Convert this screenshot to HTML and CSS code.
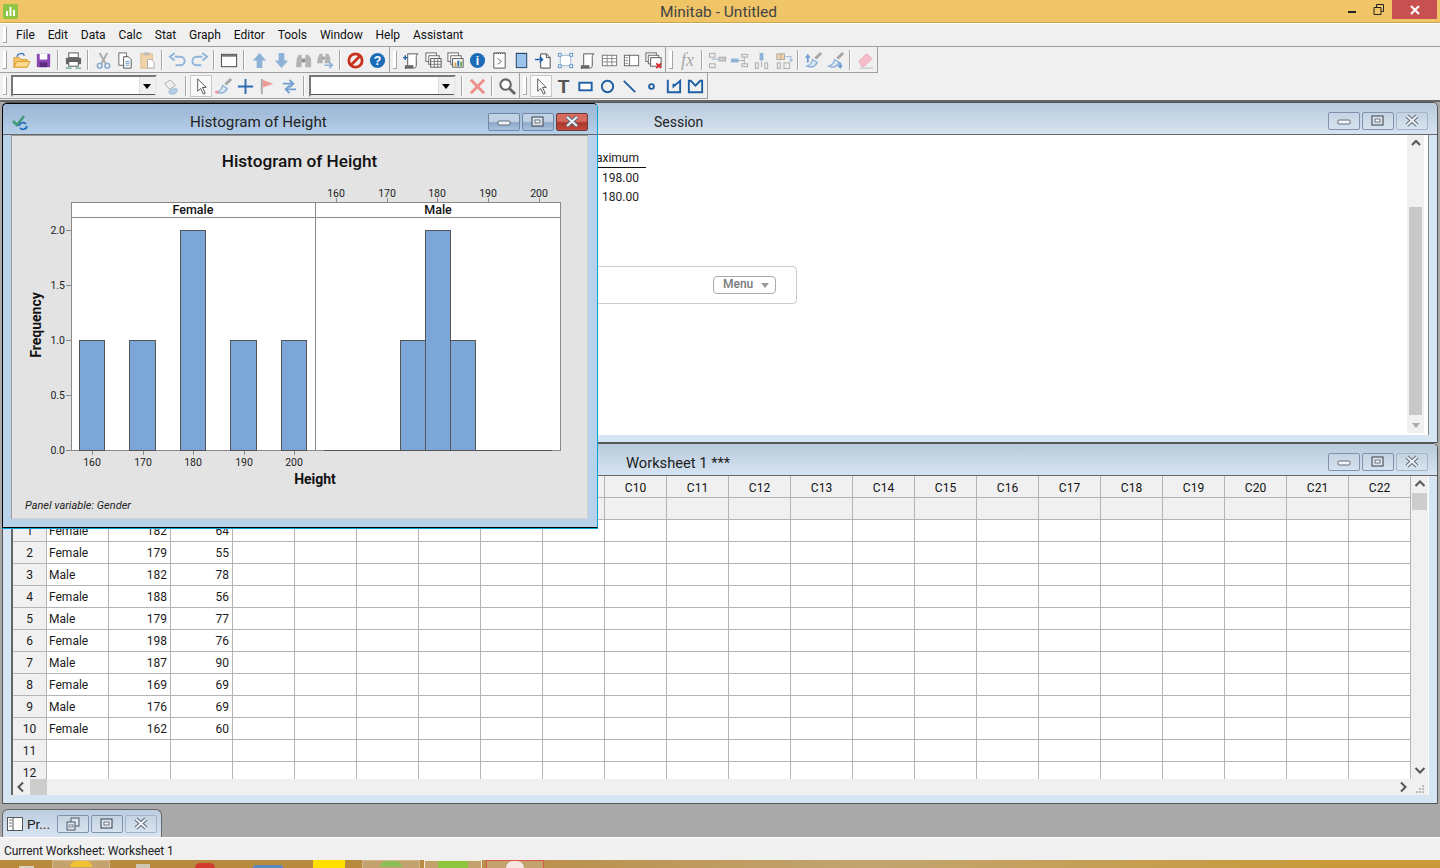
FILE: index.html
```html
<!DOCTYPE html>
<html lang="en">
<head>
<meta charset="utf-8">
<title>Minitab - Untitled</title>
<link rel="stylesheet" href="styles.css">
</head>
<body>
<svg class="defs" aria-hidden="true">
  <symbol id="w-min" viewBox="0 0 32 18"><rect x="10" y="8" width="12" height="4" rx="1" fill="#f4f6f9" stroke="#5f6b7a"/></symbol>
  <symbol id="w-max" viewBox="0 0 32 18"><rect x="10" y="4" width="11" height="9" fill="#dfe5ec" stroke="#4d5866" stroke-width="1.2"/><rect x="13" y="7" width="5" height="3" fill="#f8f9fb" stroke="#4d5866" stroke-width=".8"/></symbol>
  <symbol id="w-close" viewBox="0 0 32 18"><path d="M11 4l10 9M21 4l-10 9" stroke="#5f6b7a" stroke-width="4"/><path d="M11 4l10 9M21 4l-10 9" stroke="#eef1f5" stroke-width="2"/></symbol>
  <symbol id="w-restore" viewBox="0 0 32 18"><rect x="14" y="3" width="8" height="8" fill="#dfe5ec" stroke="#4d5866"/><rect x="10" y="7" width="8" height="8" fill="#dfe5ec" stroke="#4d5866"/><rect x="12" y="10" width="4" height="2" fill="#fff" stroke="#4d5866" stroke-width=".7"/></symbol>
  <symbol id="t-brush" viewBox="0 0 20 20"><path d="M12 8l6-6" stroke="#a5a5a5" stroke-width="3"/><path d="M3 16c3-1 5-3 6-7l5 3c-2 4-6 6-11 4z" fill="#dbe7f3" stroke="#8db1d7" stroke-width="1.400"/></symbol>
</svg>

<header class="titlebar">
  <svg class="appicon" viewBox="0 0 15 15"><rect width="15" height="15" rx="2" fill="#8ec641"/><path d="M3 12V7h2v5zM6.500 12V3h2v9zM10 12V6h2v6z" fill="#fff"/></svg>
  <span class="apptitle">Minitab - Untitled</span>
  <div class="appctl">
    <svg class="ctl" viewBox="0 0 26 19"><rect x="8" y="11" width="8" height="2" fill="#222"/></svg>
    <svg class="ctl" viewBox="0 0 26 19"><path d="M8 7.500h7v7h-7zM10.500 7V4.500h7v7H15.500" fill="none" stroke="#222" stroke-width="1"/></svg>
    <span class="ctl-close"><svg class="ctl-x" viewBox="0 0 10 10"><path d="M1 1l8 8M9 1l-8 8" stroke="#fff" stroke-width="2"/></svg></span>
  </div>
</header>

<nav class="menubar">
  <span class="grip"></span>
  <span class="mi">File</span><span class="mi">Edit</span><span class="mi">Data</span><span class="mi">Calc</span><span class="mi">Stat</span><span class="mi">Graph</span><span class="mi">Editor</span><span class="mi">Tools</span><span class="mi">Window</span><span class="mi">Help</span><span class="mi">Assistant</span>
</nav>

<div class="tbrow">
  <div class="toolbar">
    <span class="grip"></span>
    <span class="tb"><svg viewBox="0 0 20 20"><path d="M2 17V7h6l1 2h7v8z" fill="#f6c56a" stroke="#d99a2b"/><path d="M2 17l3-6h14l-3 6z" fill="#fbd98f" stroke="#d99a2b"/><path d="M5 6c1-3 4-4 7-3l1 2" fill="none" stroke="#3f7fbf" stroke-width="1.500"/></svg></span>
    <span class="tb"><svg viewBox="0 0 20 20"><path d="M3 3h14v14H3z" fill="#8a46b4"/><rect x="6" y="3" width="8" height="6" fill="#fff"/><rect x="6" y="12" width="8" height="5" fill="#5c2a80"/></svg></span>
    <span class="sep"></span>
    <span class="tb"><svg viewBox="0 0 20 20"><rect x="5" y="2" width="10" height="5" fill="#fff" stroke="#555"/><rect x="2" y="7" width="16" height="7" rx="1" fill="#666"/><rect x="5" y="11" width="10" height="5" fill="#fff" stroke="#555"/><path d="M2 18h6M12 18h6" stroke="#2f8f6f"/></svg></span>
    <span class="sep"></span>
    <span class="tb"><svg viewBox="0 0 20 20"><path d="M6 2l6 11M14 2L8 13" stroke="#a9a9a9" stroke-width="2"/><circle cx="6" cy="15.500" r="2.500" fill="none" stroke="#7ea6d2" stroke-width="1.500"/><circle cx="14" cy="15.500" r="2.500" fill="none" stroke="#7ea6d2" stroke-width="1.500"/></svg></span>
    <span class="tb"><svg viewBox="0 0 20 20"><path d="M3 2h8v13H3z" fill="#fff" stroke="#666"/><path d="M8 6h5l3 3v9H8z" fill="#fff" stroke="#555"/><path d="M10 11h4M10 13h4M10 15h4" stroke="#5f93c8"/></svg></span>
    <span class="tb"><svg viewBox="0 0 20 20"><rect x="3" y="3" width="12" height="15" fill="#f1d3a7" stroke="#dcbb8b"/><rect x="6" y="1.500" width="6" height="3" fill="#bbb"/><path d="M10 9h4l3 3v6h-7z" fill="#fff" stroke="#aaa"/></svg></span>
    <span class="sep"></span>
    <span class="tb"><svg viewBox="0 0 20 20"><path d="M7 6h6c6 0 6 9 0 9H8" fill="none" stroke="#8fb4da" stroke-width="2"/><path d="M7 2L2 6l5 4" fill="none" stroke="#8fb4da" stroke-width="2"/></svg></span>
    <span class="tb"><svg viewBox="0 0 20 20"><path d="M13 6H7c-6 0-6 9 0 9h5" fill="none" stroke="#8fb4da" stroke-width="2"/><path d="M13 2l5 4-5 4" fill="none" stroke="#8fb4da" stroke-width="2"/></svg></span>
    <span class="sep"></span>
    <span class="tb"><svg viewBox="0 0 20 20"><rect x="1.500" y="3.500" width="16" height="13" fill="#fff" stroke="#444"/><rect x="2" y="4" width="15" height="2" fill="#777"/></svg></span>
    <span class="sep"></span>
    <span class="tb"><svg viewBox="0 0 20 20"><path d="M10 2l7 8h-4v8H7v-8H3z" fill="#8db1d7"/></svg></span>
    <span class="tb"><svg viewBox="0 0 20 20"><path d="M10 18l7-8h-4V2H7v8H3z" fill="#8db1d7"/></svg></span>
    <span class="tb"><svg viewBox="0 0 20 20"><path d="M3 8l2-4h3v13H2zM12 4h3l3 4 0 9h-6z" fill="#b3b3b3"/><rect x="8" y="8" width="4" height="4" fill="#8f8f8f"/></svg></span>
    <span class="tb"><svg viewBox="0 0 20 20"><path d="M2 7l2-4h3v10H1zM10 3h3l2 4v6H9z" fill="#b3b3b3"/><rect x="7" y="6" width="2" height="3" fill="#8f8f8f"/><path d="M9 15h7M14 12l3 3-3 3" fill="none" stroke="#8db1d7" stroke-width="1.800"/></svg></span>
    <span class="sep"></span>
    <span class="tb"><svg viewBox="0 0 20 20"><circle cx="10" cy="10" r="7" fill="none" stroke="#c9321f" stroke-width="3"/><path d="M5 15L15 5" stroke="#c9321f" stroke-width="3"/></svg></span>
    <span class="tb"><svg viewBox="0 0 20 20"><circle cx="10" cy="10" r="8" fill="#1c6cb8"/><text x="10" y="14.500" class="glyph-q">?</text></svg></span>
    <span class="endpad"></span>
  </div>
  <div class="toolbar">
    <span class="grip"></span>
    <span class="tb"><svg viewBox="0 0 20 20"><path d="M6 3h11c-2 1-2 2-2 4v8c0 2-1 3-3 3H3c2 0 3-1 3-3z" fill="#fff" stroke="#555"/><path d="M3 15h9v3H3z" fill="#666"/><path d="M1 7h5M3.500 4.500V9.500" stroke="#1c5fa8" stroke-width="1.500"/></svg></span>
    <span class="tb"><svg viewBox="0 0 20 20"><rect x="2" y="2" width="11" height="9" fill="#fff" stroke="#666"/><rect x="5" y="5" width="11" height="9" fill="#fff" stroke="#666"/><rect x="7" y="8" width="11" height="9" fill="#fff" stroke="#555"/><path d="M7 11h11M7 14h11M11 8v9M14.500 8v9" stroke="#777"/></svg></span>
    <span class="tb"><svg viewBox="0 0 20 20"><rect x="2" y="2" width="11" height="9" fill="#fff" stroke="#666"/><rect x="5" y="5" width="11" height="9" fill="#fff" stroke="#666"/><rect x="7" y="8" width="11" height="9" fill="#fff" stroke="#555"/><rect x="9" y="12" width="2" height="4" fill="#d99a2b"/><rect x="12" y="10" width="2" height="6" fill="#1c6cb8"/><rect x="15" y="11" width="2" height="5" fill="#6aa84f"/></svg></span>
    <span class="tb"><svg viewBox="0 0 20 20"><circle cx="10" cy="10" r="8" fill="#1c6cb8"/><text x="10" y="14.500" class="glyph-q">i</text></svg></span>
    <span class="tb"><svg viewBox="0 0 20 20"><path d="M4 2h12v16H4z" fill="#fff" stroke="#555"/><path d="M5 2v1M7 2v1M9 2v1M11 2v1M13 2v1M15 2v1" stroke="#333"/><path d="M8 8l4 3-4 3" fill="none" stroke="#666"/></svg></span>
    <span class="tb"><svg viewBox="0 0 20 20"><rect x="4.500" y="2.500" width="11" height="15" fill="#9cc4ea" stroke="#1f3f66"/><path d="M5 2v1M7 2v1M9 2v1M11 2v1M13 2v1M15 2v1" stroke="#1f3f66" stroke-width="1"/></svg></span>
    <span class="tb"><svg viewBox="0 0 20 20"><path d="M7 3h6l4 4v11H7z" fill="#fff" stroke="#444"/><path d="M13 3v4h4" fill="none" stroke="#444"/><path d="M1 9h8M6 6l3 3-3 3" fill="none" stroke="#1c5fa8" stroke-width="1.500"/></svg></span>
    <span class="tb"><svg viewBox="0 0 20 20"><rect x="4.500" y="4.500" width="11" height="11" fill="#fff" stroke="#9db4cc"/><g fill="#fff" stroke="#5d92c8"><rect x="2.500" y="2.500" width="3" height="3"/><rect x="14.500" y="2.500" width="3" height="3"/><rect x="2.500" y="14.500" width="3" height="3"/><rect x="14.500" y="14.500" width="3" height="3"/></g></svg></span>
    <span class="tb"><svg viewBox="0 0 20 20"><path d="M6 3h11c-2 1-2 2-2 4v8c0 2-1 3-3 3H3c2 0 3-1 3-3z" fill="#fff" stroke="#555"/><path d="M3 15h9v3H3z" fill="#666"/></svg></span>
    <span class="tb"><svg viewBox="0 0 20 20"><rect x="2.500" y="4.500" width="15" height="11" fill="#fff" stroke="#777"/><path d="M2 8h16M2 11.500h16M7.500 4v12M12.500 4v12" stroke="#888"/></svg></span>
    <span class="tb"><svg viewBox="0 0 20 20"><rect x="2.500" y="4.500" width="15" height="11" fill="#fff" stroke="#666"/><path d="M8 4v12" stroke="#666"/><path d="M3.500 7h3M3.500 10h3M3.500 13h3" stroke="#888"/></svg></span>
    <span class="tb"><svg viewBox="0 0 20 20"><rect x="2" y="2" width="11" height="9" fill="#fff" stroke="#666"/><rect x="4.500" y="4.500" width="11" height="9" fill="#fff" stroke="#666"/><rect x="7" y="7" width="11" height="9" fill="#fff" stroke="#555"/><path d="M13 13l5 5M18 13l-5 5" stroke="#d22" stroke-width="1.800"/></svg></span>
    <span class="endpad"></span>
  </div>
  <div class="toolbar">
    <span class="grip"></span>
    <span class="tb"><svg viewBox="0 0 20 20"><text x="10" y="15.500" class="glyph-fx">fx</text></svg></span>
    <span class="sep"></span>
    <span class="tb"><svg viewBox="0 0 20 20"><g fill="#eee" stroke="#aaa"><rect x="1.500" y="2.500" width="6" height="4"/><rect x="1.500" y="13.500" width="6" height="4"/></g><rect x="11.500" y="6.500" width="7" height="4" fill="#ccc" stroke="#aaa"/><path d="M4 8.500h7" stroke="#8db1d7"/></svg></span>
    <span class="tb"><svg viewBox="0 0 20 20"><rect x="1" y="8" width="8" height="4" fill="#8db1d7"/><g fill="#eee" stroke="#aaa"><rect x="12.500" y="3.500" width="6" height="3"/><rect x="12.500" y="13.500" width="6" height="3"/></g><path d="M9 10h6M15 6v8" stroke="#aaa"/></svg></span>
    <span class="tb"><svg viewBox="0 0 20 20"><rect x="8" y="2" width="4" height="8" fill="#8db1d7"/><g fill="#eee" stroke="#aaa"><rect x="3.500" y="12.500" width="3" height="6"/><rect x="13.500" y="12.500" width="3" height="6"/></g><path d="M10 11v6" stroke="#aaa"/></svg></span>
    <span class="tb"><svg viewBox="0 0 20 20"><rect x="3" y="3" width="8" height="6" fill="#f1d3a7" stroke="#aaa"/><path d="M7 3v6" stroke="#aaa"/><g fill="#eee" stroke="#aaa"><rect x="3.500" y="12.500" width="3" height="6"/><rect x="10.500" y="12.500" width="6" height="6"/></g><path d="M12 6h6v5M16 9l2 2 2-2" fill="none" stroke="#8db1d7"/></svg></span>
    <span class="sep"></span>
    <span class="tb"><svg viewBox="0 0 20 20"><use href="#t-brush"/><path d="M4 3l3 4H5v5H3V7H1z" fill="#6f9fd0"/></svg></span>
    <span class="tb"><svg viewBox="0 0 20 20"><use href="#t-brush"/><path d="M15 19l3-4h-2v-3h-2v3h-2z" fill="#6f9fd0"/></svg></span>
    <span class="sep"></span>
    <span class="tb"><svg viewBox="0 0 20 20"><path d="M3 11l8-8 6 5-8 8H6z" fill="#f4bcc8" stroke="#f0a9b8"/><path d="M4 18h14" stroke="#bbb"/></svg></span>
    <span class="endpad"></span>
  </div>
</div>

<div class="tbrow">
  <div class="toolbar">
    <span class="grip grip-w"></span>
    <span class="combo combo-a"><span class="combo-btn"></span></span>
    <span class="tb"><svg viewBox="0 0 20 20"><path d="M3 7l6-4 5 6-6 4z" fill="#eee" stroke="#aaa"/><path d="M7 16c2-4 6-4 9-3 0 3-2 5-5 5-2 0-3-1-4-2z" fill="#b9d0e8" stroke="#8db1d7"/></svg></span>
    <span class="sep"></span>
    <span class="tb tb-on"><svg viewBox="0 0 20 20"><path d="M6 2v13l3-3 3 6 2-1-3-6h4z" fill="#fff" stroke="#555"/></svg></span>
    <span class="tb"><svg viewBox="0 0 20 20"><use href="#t-brush"/><circle cx="3" cy="16" r="1.800" fill="#ef9aa0"/></svg></span>
    <span class="tb"><svg viewBox="0 0 20 20"><path d="M10 2v16M2 10h16" stroke="#2a6cb0" stroke-width="2"/></svg></span>
    <span class="tb"><svg viewBox="0 0 20 20"><path d="M4 2v16" stroke="#aaa" stroke-width="2"/><path d="M5 3l11 4-11 4z" fill="#f09a96"/></svg></span>
    <span class="tb"><svg viewBox="0 0 20 20"><path d="M3 7h10M10 3l4 4-4 4M17 13H7M10 9l-4 4 4 4" fill="none" stroke="#6f9fd0" stroke-width="2"/></svg></span>
    <span class="sep"></span>
    <span class="combo combo-b"><span class="combo-btn"></span></span>
    <span class="sep"></span>
    <span class="tb"><svg viewBox="0 0 20 20"><path d="M3 3l14 14M17 3L3 17" stroke="#ec8f88" stroke-width="3"/></svg></span>
    <span class="sep"></span>
    <span class="tb"><svg viewBox="0 0 20 20"><circle cx="8" cy="8" r="5.500" fill="#fff" stroke="#666" stroke-width="2.200"/><path d="M12 12l6 6" stroke="#666" stroke-width="3"/></svg></span>
    <span class="endpad"></span>
  </div>
  <div class="toolbar">
    <span class="grip"></span>
    <span class="tb tb-on"><svg viewBox="0 0 20 20"><path d="M6 2v13l3-3 3 6 2-1-3-6h4z" fill="#fff" stroke="#555"/></svg></span>
    <span class="tb"><svg viewBox="0 0 20 20"><text x="10" y="17" class="glyph-t">T</text></svg></span>
    <span class="tb"><svg viewBox="0 0 20 20"><rect x="3.500" y="6" width="13" height="8" fill="#fff" stroke="#1f5fa5" stroke-width="2"/></svg></span>
    <span class="tb"><svg viewBox="0 0 20 20"><circle cx="10" cy="10" r="6" fill="none" stroke="#1f5fa5" stroke-width="2"/></svg></span>
    <span class="tb"><svg viewBox="0 0 20 20"><path d="M4 4l12 12" stroke="#1f5fa5" stroke-width="2"/></svg></span>
    <span class="tb"><svg viewBox="0 0 20 20"><circle cx="10" cy="10" r="2.500" fill="#fff" stroke="#1f5fa5" stroke-width="2"/></svg></span>
    <span class="tb"><svg viewBox="0 0 20 20"><path d="M4 3v13h13V4l-7 6V7" fill="none" stroke="#1f5fa5" stroke-width="2"/></svg></span>
    <span class="tb"><svg viewBox="0 0 20 20"><path d="M3 4h2l5 5 5-5h2v12H3z" fill="none" stroke="#1f5fa5" stroke-width="2"/></svg></span>
    <span class="endpad"></span>
  </div>
</div>

<main class="desktop">
  <section class="win win-session">
    <div class="wtitle">
      <span class="wname wname-child">Session</span>
      <span class="wbtns">
        <span class="wb"><svg><use href="#w-min"/></svg></span><span class="wb"><svg><use href="#w-max"/></svg></span><span class="wb wb-dim"><svg><use href="#w-close"/></svg></span>
      </span>
    </div>
    <div class="session-client">
      <div class="session-body">
        <table class="stats">
          <tr><th>Maximum</th></tr>
          <tr><td>198.00</td></tr>
          <tr><td>180.00</td></tr>
        </table>
        <div class="menubox"><span class="menubtn">Menu<i class="caret"></i></span></div>
      </div>
      <div class="vs vs-session">
        <svg class="arrow" viewBox="0 0 16 16"><path d="M4 10l4-4 4 4" fill="none" stroke="#555" stroke-width="2"/></svg>
        <span class="vs-thumb"></span>
        <svg class="arrow arrow-end" viewBox="0 0 16 16"><path d="M4 6h8l-4 5z" fill="#aaa"/></svg>
      </div>
      <span class="session-gap"></span>
    </div>
  </section>

  <section class="win win-sheet">
    <div class="wtitle">
      <span class="wname wname-child wname-sheet">Worksheet 1 ***</span>
      <span class="wbtns">
        <span class="wb"><svg><use href="#w-min"/></svg></span><span class="wb"><svg><use href="#w-max"/></svg></span><span class="wb wb-dim"><svg><use href="#w-close"/></svg></span>
      </span>
    </div>
    <div class="sheet-client">
      <div class="sheet-top">
        <div class="grid-wrap">
          <table class="grid">
            <tr class="head"><th class="rh"></th><th></th><th></th><th></th><th></th><th></th><th></th><th></th><th></th><th></th><th>C10</th><th>C11</th><th>C12</th><th>C13</th><th>C14</th><th>C15</th><th>C16</th><th>C17</th><th>C18</th><th>C19</th><th>C20</th><th>C21</th><th>C22</th></tr>
            <tr class="names"><th class="rh"></th><td></td><td></td><td></td><td></td><td></td><td></td><td></td><td></td><td></td><td></td><td></td><td></td><td></td><td></td><td></td><td></td><td></td><td></td><td></td><td></td><td></td><td></td></tr>
            <tr><th class="rh">1</th><td>Female</td><td class="n">182</td><td class="n">64</td><td></td><td></td><td></td><td></td><td></td><td></td><td></td><td></td><td></td><td></td><td></td><td></td><td></td><td></td><td></td><td></td><td></td><td></td><td></td></tr>
            <tr><th class="rh">2</th><td>Female</td><td class="n">179</td><td class="n">55</td><td></td><td></td><td></td><td></td><td></td><td></td><td></td><td></td><td></td><td></td><td></td><td></td><td></td><td></td><td></td><td></td><td></td><td></td><td></td></tr>
            <tr><th class="rh">3</th><td>Male</td><td class="n">182</td><td class="n">78</td><td></td><td></td><td></td><td></td><td></td><td></td><td></td><td></td><td></td><td></td><td></td><td></td><td></td><td></td><td></td><td></td><td></td><td></td><td></td></tr>
            <tr><th class="rh">4</th><td>Female</td><td class="n">188</td><td class="n">56</td><td></td><td></td><td></td><td></td><td></td><td></td><td></td><td></td><td></td><td></td><td></td><td></td><td></td><td></td><td></td><td></td><td></td><td></td><td></td></tr>
            <tr><th class="rh">5</th><td>Male</td><td class="n">179</td><td class="n">77</td><td></td><td></td><td></td><td></td><td></td><td></td><td></td><td></td><td></td><td></td><td></td><td></td><td></td><td></td><td></td><td></td><td></td><td></td><td></td></tr>
            <tr><th class="rh">6</th><td>Female</td><td class="n">198</td><td class="n">76</td><td></td><td></td><td></td><td></td><td></td><td></td><td></td><td></td><td></td><td></td><td></td><td></td><td></td><td></td><td></td><td></td><td></td><td></td><td></td></tr>
            <tr><th class="rh">7</th><td>Male</td><td class="n">187</td><td class="n">90</td><td></td><td></td><td></td><td></td><td></td><td></td><td></td><td></td><td></td><td></td><td></td><td></td><td></td><td></td><td></td><td></td><td></td><td></td><td></td></tr>
            <tr><th class="rh">8</th><td>Female</td><td class="n">169</td><td class="n">69</td><td></td><td></td><td></td><td></td><td></td><td></td><td></td><td></td><td></td><td></td><td></td><td></td><td></td><td></td><td></td><td></td><td></td><td></td><td></td></tr>
            <tr><th class="rh">9</th><td>Male</td><td class="n">176</td><td class="n">69</td><td></td><td></td><td></td><td></td><td></td><td></td><td></td><td></td><td></td><td></td><td></td><td></td><td></td><td></td><td></td><td></td><td></td><td></td><td></td></tr>
            <tr><th class="rh">10</th><td>Female</td><td class="n">162</td><td class="n">60</td><td></td><td></td><td></td><td></td><td></td><td></td><td></td><td></td><td></td><td></td><td></td><td></td><td></td><td></td><td></td><td></td><td></td><td></td><td></td></tr>
            <tr><th class="rh">11</th><td></td><td></td><td></td><td></td><td></td><td></td><td></td><td></td><td></td><td></td><td></td><td></td><td></td><td></td><td></td><td></td><td></td><td></td><td></td><td></td><td></td><td></td></tr>
            <tr><th class="rh">12</th><td></td><td></td><td></td><td></td><td></td><td></td><td></td><td></td><td></td><td></td><td></td><td></td><td></td><td></td><td></td><td></td><td></td><td></td><td></td><td></td><td></td><td></td></tr>
          </table>
        </div>
        <div class="vs vs-sheet">
          <svg class="arrow" viewBox="0 0 16 16"><path d="M3.500 10l4.500-4.500 4.500 4.500" fill="none" stroke="#555" stroke-width="2"/></svg>
          <span class="vs-thumb"></span>
          <svg class="arrow arrow-end" viewBox="0 0 16 16"><path d="M3.500 6l4.500 4.500 4.500-4.500" fill="none" stroke="#555" stroke-width="2"/></svg>
        </div>
      </div>
      <div class="hs">
        <svg class="arrow" viewBox="0 0 16 16"><path d="M10 3.500L5.500 8l4.500 4.500" fill="none" stroke="#555" stroke-width="2"/></svg>
        <span class="hs-thumb"></span>
        <svg class="arrow arrow-right" viewBox="0 0 16 16"><path d="M6 3.500L10.500 8 6 12.500" fill="none" stroke="#555" stroke-width="2"/></svg>
        <svg class="sizer" viewBox="0 0 10 10"><path d="M7 1h2v2H7zM4 4h2v2H4zM7 4h2v2H7zM1 7h2v2H1zM4 7h2v2H4zM7 7h2v2H7z" fill="#bbb"/></svg>
      </div>
    </div>
  </section>

  <section class="win win-hist">
    <div class="wtitle wtitle-active">
      <svg class="wicon" viewBox="0 0 18 18"><path d="M1 8l4 4 7-9" fill="none" stroke="#3f9a7a" stroke-width="2.500"/><path d="M7 13a4 4 0 0 1 7-2M15 13a4 4 0 0 1-7 2" fill="none" stroke="#1c6cb8" stroke-width="1.800"/></svg>
      <span class="wname wname-hist">Histogram of Height</span>
      <span class="wbtns wbtns-hist">
        <span class="wb wb-active"><svg><use href="#w-min"/></svg></span><span class="wb wb-active"><svg><use href="#w-max"/></svg></span><span class="wb wb-red"><svg><use href="#w-close"/></svg></span>
      </span>
    </div>
    <div class="graph">
      <svg class="plot" viewBox="11 135 577 384">
        <text x="299.500" y="167" class="g-title">Histogram of Height</text>
        <g class="g-tick"><text x="336" y="197">160</text><text x="387" y="197">170</text><text x="437" y="197">180</text><text x="488" y="197">190</text><text x="539" y="197">200</text></g>
        <rect x="71.500" y="202.500" width="489" height="248" fill="#fff" stroke="#8a8a8a"/>
        <path d="M71 217.500h489M315.500 202v248" stroke="#8a8a8a"/>
        <path d="M336.500 198v4M387.500 198v4M437.500 198v4M488.500 198v4M539.500 198v4M92.500 451v4M143.500 451v4M193.500 451v4M244.500 451v4M294.500 451v4M66 230.500h5M66 285.500h5M66 340.500h5M66 395.500h5M66 450.500h5" stroke="#8a8a8a"/>
        <g class="g-strip"><text x="193" y="214">Female</text><text x="438" y="214">Male</text></g>
        <g fill="#7ca6d8" stroke="#555">
          <rect x="79.500" y="340.500" width="25" height="110"/>
          <rect x="129.500" y="340.500" width="26" height="110"/>
          <rect x="180.500" y="230.500" width="25" height="220"/>
          <rect x="230.500" y="340.500" width="26" height="110"/>
          <rect x="281.500" y="340.500" width="25" height="110"/>
          <rect x="400.500" y="340.500" width="25" height="110"/>
          <rect x="425.500" y="230.500" width="25" height="220"/>
          <rect x="450.500" y="340.500" width="25" height="110"/>
        </g>
        <path d="M324 450.500h228" stroke="#555"/>
        <g class="g-tick g-y"><text x="65" y="234">2.0</text><text x="65" y="289">1.5</text><text x="65" y="344">1.0</text><text x="65" y="399">0.5</text><text x="65" y="454">0.0</text></g>
        <g class="g-tick"><text x="92" y="466">160</text><text x="143" y="466">170</text><text x="193" y="466">180</text><text x="244" y="466">190</text><text x="294" y="466">200</text></g>
        <text x="315" y="484" class="g-axis">Height</text>
        <text class="g-axis" transform="translate(41 325) rotate(-90)">Frequency</text>
        <text x="25" y="509" class="g-note">Panel variable: Gender</text>
      </svg>
    </div>
  </section>

  <div class="mintab">
    <svg class="panelicon" viewBox="0 0 16 16"><rect x=".5" y="1.500" width="15" height="13" fill="#fff" stroke="#555"/><path d="M6 1.500v13" stroke="#555"/><path d="M2 4h3M2 7h3M2 10h3" stroke="#777"/></svg>
    <span class="minname">Pr...</span>
    <span class="wbtns wbtns-min">
      <span class="wb"><svg><use href="#w-restore"/></svg></span><span class="wb"><svg><use href="#w-max"/></svg></span><span class="wb wb-dim"><svg><use href="#w-close"/></svg></span>
    </span>
  </div>
</main>

<footer class="status">Current Worksheet: Worksheet 1</footer>

<div class="taskbar">
  <span class="tk tk-a"><i class="dot dot-start"></i></span>
  <span class="tk tk-tile"><i class="dot dot-ie"></i></span>
  <i class="dot dot-grey"></i>
  <i class="dot dot-red"></i>
  <i class="dot dot-blue"></i>
  <i class="dot dot-yellow"></i>
  <span class="tk tk-tile tk-3"><i class="dot dot-green"></i></span>
  <span class="tk tk-tile tk-act"><i class="dot dot-green2"></i></span>
  <span class="tk tk-tile tk-rd"><i class="dot dot-white"></i></span>
</div>
</body>
</html>
```

FILE: styles.css
```css
* { box-sizing: border-box; }
html, body { margin: 0; padding: 0; }
body {
  width: 1440px; height: 868px; overflow: hidden;
  font-family: Roboto, "Open Sans", sans-serif; font-size: 12px; color: #111;
  background: #f0f0f0; display: flex; flex-direction: column;
}
.defs { width: 0; height: 0; position: absolute; }

/* app title */
.titlebar { height: 23px; flex: none; background: #f0c567; border-bottom: 1px solid #caa650; display: flex; align-items: flex-start; position: relative; }
.appicon { width: 15px; height: 15px; margin: 4px 0 0 3px; }
.apptitle { flex: 1; text-align: center; font-size: 15.500px; line-height: 24px; color: #444; padding-left: 79px; }
.appctl { display: flex; align-items: flex-start; margin-right: 3px; }
.ctl { width: 26px; height: 19px; }
.ctl-close { width: 45px; height: 19px; background: #c75050; display: flex; align-items: center; justify-content: center; margin-left: 0; }
.ctl-x { width: 10px; height: 10px; }

/* menu */
.menubar { height: 24px; flex: none; display: flex; align-items: center; background: #f0f0f0; border-top: 1px solid #fff; border-bottom: 1px solid #a0a0a0; }
.mi { margin-right: 12.800px; line-height: 22px; }
.grip { width: 10px; height: 100%; flex: none; position: relative; display: block; }
.grip::before { content: ""; position: absolute; left: 3px; top: 3px; bottom: 3px; width: 3px; border-right: 1px solid #a5a5a5; border-bottom: 1px solid #a5a5a5; background: #fff; }
.menubar .grip { width: 16px; height: 22px; }
.grip-w { width: 11px; }

/* toolbars */
.tbrow { height: 26px; flex: none; display: flex; background: #f0f0f0; }
.toolbar { display: flex; align-items: center; height: 26px; padding-top: 1px; border-right: 1px solid #a0a0a0; border-bottom: 1px solid #a0a0a0; }
.tb { width: 22px; height: 22px; flex: none; display: flex; align-items: center; justify-content: center; }
.tb svg { width: 19px; height: 19px; }
.tb-on { background: #f9f9f9; border: 1px solid #c8c8c8; }
.sep { width: 8px; height: 22px; flex: none; position: relative; display: block; }
.sep::before { content: ""; position: absolute; left: 3px; top: 1px; bottom: 1px; border-left: 1px solid #a5a5a5; border-right: 1px solid #fff; }
.endpad { width: 1px; flex: none; }
.glyph-q { font: bold 13px "Liberation Sans", sans-serif; fill: #fff; text-anchor: middle; }
.glyph-fx { font: italic 19px "Liberation Serif", serif; fill: #aaa; text-anchor: middle; }
.glyph-t { font: bold 20px "Liberation Sans", sans-serif; fill: #555; text-anchor: middle; }
.combo { height: 22px; flex: none; display: flex; justify-content: flex-end; background: #fff; border: 2px solid; border-color: #777 #e8e8e8 #e8e8e8 #777; box-shadow: inset -1px -1px 0 #555; padding: 0 0 1px 0; }
.combo-a { width: 146px; margin-right: 3px; }
.combo-b { width: 147px; margin: 0 2px 0 1px; }
.combo-btn { width: 16px; background: #f0f0f0; border-left: 1px solid #ddd; position: relative; display: block; margin-bottom: 0; }
.combo-btn::after { content: ""; position: absolute; left: 3px; top: 7px; border: 4.500px solid transparent; border-top: 5px solid #000; border-bottom: 0; }

/* MDI desktop */
.desktop { height: 737px; flex: none; position: relative; background: #a9a9a9; border-top: 2px solid #666; margin-top: 1px; }
.win { position: absolute; display: flex; flex-direction: column; border: 1px solid #555; background: #d7e4f1; padding: 0 8px 8px 8px; border-top-left-radius: 5px; border-top-right-radius: 5px; }
.win-session { left: 2px; top: 0; width: 1436px; height: 341px; }
.win-sheet { left: 2px; top: 341px; width: 1436px; height: 361px; }
.win-hist { left: 2px; top: 1px; width: 596px; height: 425px; background: #b9d2ec; border-color: #000 #00a6d6 #000 #000; box-shadow: 0 1px 0 #00a6d6; }
.wtitle { height: 32px; flex: none; margin: 0 -8px; display: flex; align-items: center; padding: 5px 9px 0 0; background: linear-gradient(#b8cadb, #d6e4f1); border-bottom: 1px solid #666; border-top-left-radius: 5px; border-top-right-radius: 5px; }
.wtitle-active { background: linear-gradient(#9ab4d2, #b6d0ea); height: 31px; }
.wname { font-size: 14px; color: #222; white-space: nowrap; padding-top: 2px; }
.wname-child { margin-left: 651px; }
.wname-sheet { margin-left: 623px; font-size: 14.700px; }
.wname-hist { margin-left: 160px; font-size: 15.200px; padding-top: 0; }
.wicon { width: 18px; height: 18px; margin-left: 9px; flex: none; }
.wbtns { margin-left: auto; display: flex; gap: 2px; }
.wbtns-hist { margin-right: 0; }
.wb { width: 32px; height: 18px; display: block; border: 1px solid #7f93ae; border-radius: 2px; background: linear-gradient(#c5d3e2, #d6e2ee); overflow: hidden; }
.wb svg { width: 32px; height: 18px; display: block; margin: -1px; }
.wb-dim { border-color: #a5b5c9; }
.wb-active { background: linear-gradient(#c2d3e6 45%, #8eaac8 55%, #a9c1da); border-color: #6f87a6; }
.wb-red { background: linear-gradient(#d66a5c 45%, #a8392d 55%, #c0493c); border-color: #6f3a3a; }

/* session */
.session-client { height: 300px; flex: none; background: #fff; display: flex; }
.session-body { flex: 1; min-width: 0; overflow: hidden; }
.stats { border-collapse: collapse; margin: 13px 0 0 569px; width: 66px; }
.stats th, .stats td { font-weight: 400; text-align: right; padding: 1px 7px 0 0; height: 19px; line-height: 18px; color: #222; }
.stats th { border-bottom: 1px solid #111; }
.menubox { margin: 60px 0 0 89px; width: 697px; height: 38px; border: 1px solid #ccc; border-radius: 4px; display: flex; align-items: center; justify-content: flex-end; padding-right: 20px; }
.menubtn { width: 63px; height: 18px; border: 1px solid #aaa; border-radius: 4px; color: #777; font-weight: 500; display: flex; align-items: center; padding: 0 0 2px 9px; line-height: 15px; }
.caret { margin: 2px 0 0 8px; border: 4px solid transparent; border-top: 5px solid #999; border-bottom: 0; }
.vs { display: flex; flex-direction: column; align-items: center; background: #f0f0f0; flex: none; }
.vs-session { width: 17px; height: 298px; }
.session-gap { width: 5px; flex: none; border-right: 1px solid #888; }
.arrow { width: 16px; height: 16px; flex: none; display: block; }
.arrow-end { margin-top: auto; }
.vs-thumb { display: block; background: #cdcdcd; flex: none; }
.vs-session .vs-thumb { width: 13px; height: 208px; margin-top: 56px; background: #c8c8c8; }

/* worksheet */
.sheet-client { height: 319px; flex: none; display: flex; flex-direction: column; background: #f0f0f0; border-left: 2px solid #666; border-right: 1px solid #fff; }
.sheet-top { height: 303px; flex: none; display: flex; }
.grid-wrap { width: 1398px; overflow: hidden; flex: none; background: #fff; }
.grid { border-collapse: separate; border-spacing: 0; table-layout: fixed; width: 1398px; }
.grid th, .grid td { width: 62px; height: 22px; padding: 2px 3px 0; font-size: 12px; font-weight: 400; line-height: 19px; border-right: 1px solid #b4b4b4; border-bottom: 1px solid #b4b4b4; white-space: nowrap; overflow: hidden; color: #1a1a1a; }
.grid th.rh { width: 34px; background: #f0f0f0; text-align: center; }
.head th { background: #f0f0f0; text-align: center; padding-top: 3px; line-height: 18px; color: #111; }
.names td { background: #f0f0f0; }
.grid td { padding-left: 2px; }
.grid .n { text-align: right; }
.vs-sheet { width: 17px; padding-bottom: 0; }
.vs-sheet .arrow { margin-top: 0; }
.vs-sheet .arrow-end { margin-top: auto; margin-bottom: 1px; }
.vs-sheet .vs-thumb { width: 15px; height: 17px; margin-top: 1px; }
.hs { height: 16px; flex: none; display: flex; align-items: center; }
.hs-thumb { display: block; width: 17px; height: 16px; background: #cdcdcd; margin-left: 1px; flex: none; }
.arrow-right { margin-left: auto; margin-right: 4px; }
.sizer { width: 10px; height: 10px; margin: 3px 3px 0 0; flex: none; }

/* histogram */
.graph { height: 384px; width: 577px; flex: none; background: #e3e3e3; box-shadow: inset 1px 1px 0 #9a9a9a, inset -1px -1px 0 #cfcfcf; }
.plot { width: 577px; height: 384px; display: block; font-family: Roboto, sans-serif; }
.g-title { font-size: 17.200px; font-weight: 500; text-anchor: middle; fill: #111; }
.g-tick text { font-size: 10.500px; text-anchor: middle; fill: #222; }
.g-y text { text-anchor: end; }
.g-strip text { font-size: 12.500px; font-weight: 500; text-anchor: middle; fill: #111; }
.g-axis { font-size: 14px; font-weight: 700; text-anchor: middle; fill: #111; }
.g-note { font-size: 11px; font-style: italic; fill: #222; }

/* minimised window */
.mintab { position: absolute; left: 2px; top: 707px; width: 160px; height: 28px; display: flex; align-items: center; background: linear-gradient(#bccde0, #d8e4f1); border: 1px solid #666; border-bottom: 0; border-top-left-radius: 6px; border-top-right-radius: 6px; padding: 0 4px 0 4px; }
.panelicon { width: 16px; height: 16px; flex: none; }
.minname { font-size: 13.500px; margin-left: 4px; color: #222; }
.wbtns-min { gap: 2px; }

/* status & taskbar */
.status { height: 23px; flex: none; background: #f0f0f0; border-top: 1px solid #fff; padding: 6px 0 0 4px; line-height: 15px; color: #222; white-space: nowrap; letter-spacing: -.07px; }
.taskbar { height: 8px; flex: none; display: flex; align-items: flex-start; overflow: hidden; background: linear-gradient(90deg, #b98a3c, #b88a40 30%, #c2a470 60%, #c89a3a 92%, #c89a3a); }
.tk { display: flex; justify-content: center; flex: none; height: 8px; }
.tk-a { width: 52px; }
.tk-tile { width: 58px; background: #c4a26e; border: 1px solid #d3b98c; border-bottom: 0; }
.tk-act { margin-left: 4px; border-color: #f4ead8; }
.tk-rd { margin-left: 4px; border-color: #d9584a; }
.dot { display: block; flex: none; }
.dot-start { width: 15px; height: 2px; margin-top: 6px; background: #d8d0c0; }
.dot-ie { width: 22px; height: 6px; border-radius: 10px 10px 0 0; background: #f1c232; }
.dot-grey { width: 14px; height: 4px; margin: 4px 0 0 26px; background: #cfc6b6; }
.dot-red { width: 20px; height: 5px; margin: 3px 0 0 45px; border-radius: 10px 10px 0 0; background: #d23a2e; }
.dot-blue { width: 30px; height: 3px; margin: 5px 0 0 38px; border-radius: 10px 10px 0 0; background: #5c86c0; }
.dot-yellow { width: 32px; height: 8px; margin-left: 30px; background: #ffe000; }
.tk-3 { margin-left: 17px; }
.dot-green { width: 22px; height: 6px; border-radius: 10px 10px 0 0; background: #8bbe55; }
.dot-green2 { width: 30px; height: 7px; background: #8cc63f; }
.dot-white { width: 18px; height: 7px; border-radius: 10px 10px 0 0; background: #f4e6e0; }
```
